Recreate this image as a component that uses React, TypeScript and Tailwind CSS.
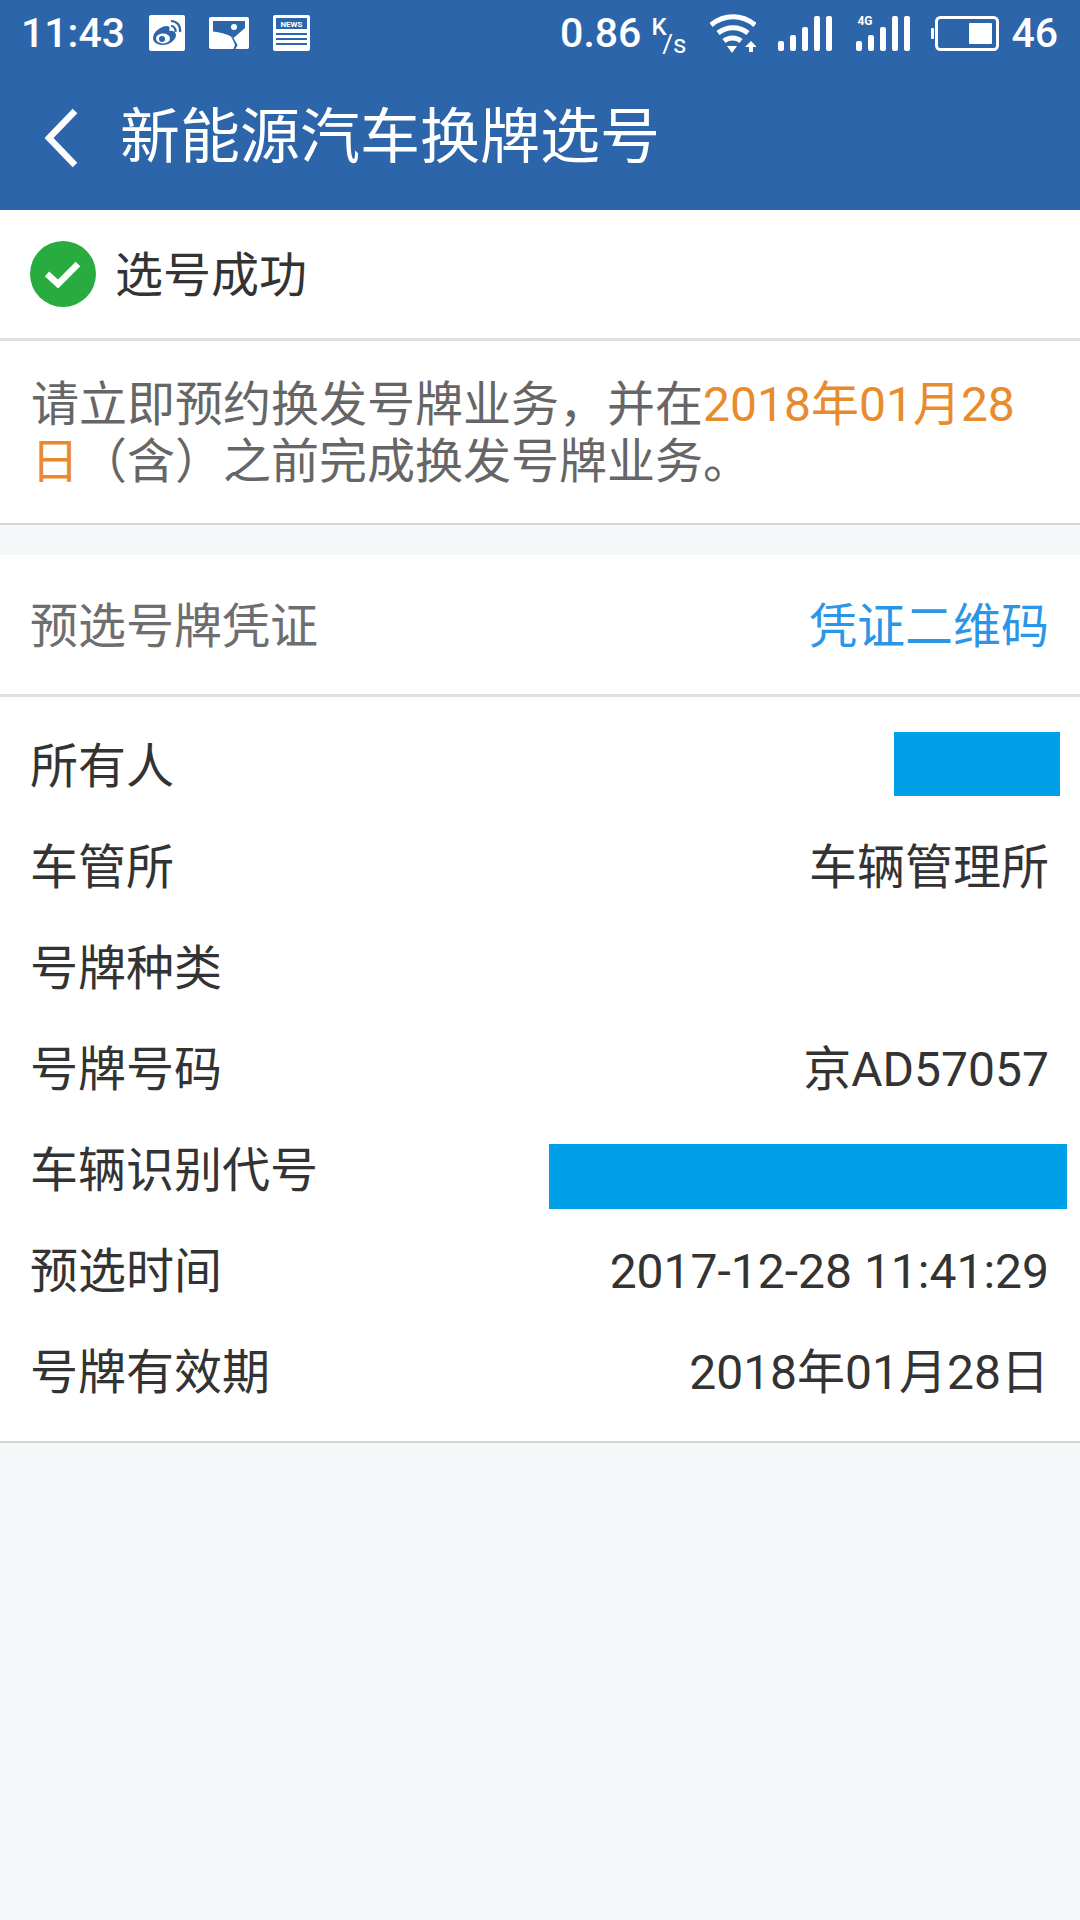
import React from 'react';

const rows: { label: string; value?: string; mask?: string }[] = [
  { label: '所有人', mask: 'w-[166px] h-[64px] mr-[-11px] mb-[6px]' },
  { label: '车管所', value: '车辆管理所' },
  { label: '号牌种类' },
  { label: '号牌号码', value: '京AD57057' },
  { label: '车辆识别代号', mask: 'w-[518px] h-[65px] mr-[-18px] mt-[12px]' },
  { label: '预选时间', value: '2017-12-28 11:41:29' },
  { label: '号牌有效期', value: '2018年01月28日' },
];

function StatusIcons() {
  return (
    <div className="flex items-center gap-[24px]">
      {/* weibo */}
      <svg width="36" height="36" viewBox="0 0 36 36">
        <rect width="36" height="36" rx="2" fill="#fff" />
        <path d="M4 23c0-6 8-12 14-12 3 0 3 3 2 5 4-1 7 1 7 4 0 5-7 10-13 10-6 0-10-3-10-7z" fill="#2c65a9" />
        <ellipse cx="14" cy="23.500" rx="7" ry="5" fill="#fff" />
        <circle cx="13" cy="24" r="3" fill="#2c65a9" />
        <path d="M22 6c6 0 10 5 9 11M22 11c3 0 5 3 4.500 6" stroke="#2c65a9" strokeWidth="2.200" fill="none" />
      </svg>
      {/* gallery */}
      <svg width="40" height="32" viewBox="0 0 40 32">
        <rect width="40" height="32" rx="2" fill="#fff" />
        <path d="M4 4h32v7L24.500 21C18 17 11 15 4 14.500z" fill="#2c65a9" />
        <path d="M24.500 21l4 7-2 4h-2l1.500-4c-1-3-2-5-4-8z" fill="#2c65a9" />
        <circle cx="25" cy="10" r="3" fill="#fff" />
      </svg>
      {/* news */}
      <svg width="37" height="36" viewBox="0 0 37 36">
        <rect width="37" height="36" rx="2" fill="#fff" />
        <rect x="3" y="3" width="31" height="11" fill="#2c65a9" />
        <text x="18.500" y="11.500" textAnchor="middle" fontSize="8" fontWeight="700" fill="#fff" fontFamily="Roboto, sans-serif">NEWS</text>
        <path d="M3 19h31M3 24h31M3 29h31" stroke="#2c65a9" strokeWidth="2" />
      </svg>
    </div>
  );
}

function SignalBars() {
  return (
    <svg width="54" height="35" viewBox="0 0 54 35" fill="#fff">
      <rect x="0" y="25" width="6" height="10" rx="2" />
      <rect x="12" y="19" width="6" height="16" rx="2" />
      <rect x="24" y="11" width="6" height="24" rx="2" />
      <rect x="36" y="0" width="6" height="35" rx="2" />
      <rect x="48" y="0" width="6" height="35" rx="2" />
    </svg>
  );
}

export default function App() {
  return (
    <div className="w-[1080px] min-h-[1920px] bg-[#f5f8f9] font-['Roboto','Noto_Sans_CJK_SC',sans-serif] text-[#333333]">
      <div className="bg-[#2c65a9] h-[210px] text-white">
        {/* status bar */}
        <div className="h-[66px] flex items-center justify-between pl-[21px] pr-[22px]">
          <div className="flex items-center gap-[24px]">
            <span className="text-[41px] font-medium leading-none">11:43</span>
            <StatusIcons />
          </div>
          <div className="flex items-center">
            <span className="text-[41px] font-medium leading-none">0.86</span>
            <span className="ml-[10px] w-[35px] h-[36px] flex flex-col">
              <span className="text-[24px] leading-none font-medium">K</span>
              <span className="text-[26px] leading-none text-right mt-[-8px]">/s</span>
            </span>
            <svg className="ml-[24px]" width="46" height="39" viewBox="0 0 46 39" fill="none" stroke="#fff" strokeWidth="5">
              <path d="M1 11c13-11 31-11 44 0M8 19c9-7 21-7 30 0M14 27c5-4 12-4 17 0" />
              <path d="M17 32h10l-5 7z" fill="#fff" stroke="none" />
              <path d="M41 27l6 6h-4v5h-4v-5h-4z" fill="#fff" stroke="none" />
            </svg>
            <div className="ml-[22px]"><SignalBars /></div>
            <div className="ml-[24px] relative">
              <span className="absolute left-[1px] top-[-1px] text-[12px] leading-none font-bold">4G</span>
              <SignalBars />
            </div>
            <svg className="ml-[21px]" width="68" height="35" viewBox="0 0 68 35" fill="none">
              <rect x="5.500" y="1.500" width="61" height="32" rx="4" stroke="#fff" strokeWidth="3" />
              <rect x="0" y="12" width="3" height="11" rx="1" fill="#fff" />
              <rect x="38" y="7" width="23" height="21" rx="1" fill="#fff" />
            </svg>
            <span className="text-[41px] font-medium leading-none ml-[12px]">46</span>
          </div>
        </div>
        {/* title bar */}
        <div className="flex items-center h-[144px]">
          <svg className="ml-[44px]" width="34" height="60" viewBox="0 0 34 60" fill="none" stroke="#fff" strokeWidth="6.500">
            <path d="M31 3L5 30l26 27" />
          </svg>
          <h1 className="text-[60px] leading-none ml-[42px] font-normal">新能源汽车换牌选号</h1>
        </div>
      </div>

      <div className="bg-white h-[131px] flex items-center pl-[30px] border-b-[3px] border-[#e0e0e0]">
        <div className="w-[66px] h-[66px] rounded-full bg-[#29ac3f] flex items-center justify-center">
          <svg width="36" height="28" viewBox="0 0 36 28" fill="none" stroke="#fff" strokeWidth="6.500">
            <path d="M2 14l11 10L33 4" />
          </svg>
        </div>
        <span className="text-[48px] leading-none ml-[19px] pt-[3px]">选号成功</span>
      </div>

      <div className="bg-white h-[184px] border-b-2 border-[#d4d4d4] pl-[31px] pr-[40px] pt-[35px] text-[48px] leading-[57px] text-[#666666]">
        请立即预约换发号牌业务，并在<span className="text-[#e88b2e]">2018年01月28日</span>（含）之前完成换发号牌业务。
      </div>

      <div className="mt-[30px] bg-white h-[142px] border-b-[3px] border-[#e0e0e0] flex items-center justify-between pl-[30px] pr-[31px] pt-[4px] text-[48px] leading-none">
        <span className="text-[#6e6e6e]">预选号牌凭证</span>
        <span className="text-[#2b96e6]">凭证二维码</span>
      </div>

      <div className="bg-white h-[746px] border-b-2 border-[#d4d4d4] pl-[30px] pr-[31px] pt-[19px] text-[48px] leading-none">
        {rows.map((row) => (
          <div key={row.label} className="h-[101px] flex items-center justify-between">
            <span>{row.label}</span>
            {row.value && <span>{row.value}</span>}
            {row.mask && <div className={`${row.mask} bg-[#00a0e9]`} />}
          </div>
        ))}
      </div>
    </div>
  );
}
